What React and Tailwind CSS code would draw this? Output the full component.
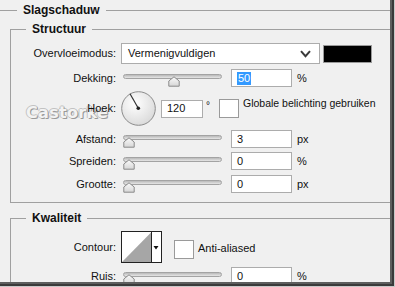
import React from "react";

const font = { fontFamily: '"Liberation Sans", Arial, sans-serif' };

// slider with track + thumb, thumb offset is passed as a full class name
const Slider = ({ thumb }) => (
  <div className="relative w-[99px] h-[18px] shrink-0">
    <div className="absolute left-0 right-0 top-[5px] h-[5px] rounded-full border border-[#a3a3a3] bg-gradient-to-b from-[#b9b9b9] to-[#e6e6e6]" />
    <svg className={`absolute top-[7px] ${thumb}`} width="12" height="11" viewBox="0 0 12 11">
      <defs>
        <linearGradient id="thumbfill" x1="0" y1="0" x2="0" y2="1">
          <stop offset="0" stopColor="#fbfbfb" />
          <stop offset="1" stopColor="#d6d6d6" />
        </linearGradient>
      </defs>
      <path d="M6 0.8 L11.2 5 V10.2 H0.8 V5 Z" fill="url(#thumbfill)" stroke="#8a8a8a" strokeWidth="1" />
    </svg>
  </div>
);

const NumBox = ({ value, selected, w = "w-[61px]" }) => (
  <div className={`${w} h-[18px] shrink-0 border border-[#acacac] bg-white flex items-center pl-[5px]`}>
    {selected ? (
      <span className="bg-[#3399ff] text-white leading-[13px] px-[1px]">{value}</span>
    ) : (
      <span>{value}</span>
    )}
  </div>
);

const Label = ({ children }) => (
  <div className="w-[105px] shrink-0 text-right">{children}</div>
);

const SliderRow = ({ label, thumb, value, unit, selected, className }) => (
  <div className={`flex items-center h-[18px] ${className}`}>
    <Label>{label}</Label>
    <div className="ml-[7px]">
      <Slider thumb={thumb} />
    </div>
    <div className="ml-[9px]">
      <NumBox value={value} selected={selected} />
    </div>
    <span className="ml-[5px]">{unit}</span>
  </div>
);

const Checkbox = () => (
  <div className="w-[20px] h-[19px] shrink-0 border border-[#9a9a9a] bg-white" />
);

export default function App() {
  return (
    <div
      className="relative w-[395px] h-[287px] overflow-hidden bg-[#f0f0f0] text-[11px] text-[#111]"
      style={font}
    >
      {/* watermark, painted under the dialog content */}
      <div
        className="absolute left-[26px] top-[101px] text-[16px] font-bold tracking-[0.3px] text-[#f3f3f3] pointer-events-none"
        style={{ fontFamily: '"DejaVu Sans", sans-serif', textShadow: "1px 1px 0 #999, -1px 0 0 #c2c2c2, 0 -1px 0 #c2c2c2, 1px 0 0 #aaa" }}
      >
        Castorke
      </div>

      {/* Slagschaduw heading */}
      <div className="relative flex items-center h-[20px]">
        <div className="w-[17px] h-px bg-[#a0a0a0]" />
        <span className="px-[6px] text-[12px] font-bold">Slagschaduw</span>
        <div className="flex-1 h-px bg-[#a0a0a0]" />
      </div>

      {/* Structuur */}
      <fieldset className="relative ml-[10px] w-[400px] border-l border-t border-b border-[#a0a0a0] pb-[9px]">
        <legend className="ml-[15px] px-[6px] text-[12px] font-bold leading-[18px]">Structuur</legend>

        <div className="flex items-center h-[21px] mt-[5px]">
          <Label>Overvloeimodus:</Label>
          <div className="ml-[5px] w-[199px] h-[21px] border border-[#acacac] bg-white flex items-center justify-between pl-[6px] pr-[8px]">
            <span>Vermenigvuldigen</span>
            <svg width="11" height="8" viewBox="0 0 11 8">
              <path d="M1 1.2 L5.5 6.2 L10 1.2" fill="none" stroke="#3a3a3a" strokeWidth="2" />
            </svg>
          </div>
          <div className="ml-[3px] w-[49px] h-[18px] border border-[#9a9a9a] bg-black" />
        </div>

        <SliderRow label="Dekking:" thumb="left-[45px]" value="50" unit="%" selected className="mt-[5px]" />

        <div className="flex items-center h-[35px] mt-[4px]">
          <Label>Hoek:</Label>
          <svg className="ml-[5px] shrink-0" width="35" height="35" viewBox="0 0 35 35">
            <defs>
              <radialGradient id="dial" cx="0.4" cy="0.35" r="0.7">
                <stop offset="0" stopColor="#ffffff" />
                <stop offset="1" stopColor="#d9d9d9" />
              </radialGradient>
            </defs>
            <circle cx="17.5" cy="17.5" r="16.8" fill="url(#dial)" stroke="#8c8c8c" strokeWidth="1" />
            <line x1="17.3" y1="17.3" x2="9" y2="2.8" stroke="#333" strokeWidth="1.2" />
            <circle cx="17.3" cy="17.3" r="1.8" fill="#222" />
          </svg>
          <div className="ml-[5px]">
            <NumBox value="120" w="w-[42px]" />
          </div>
          <span className="ml-[3px] self-start mt-[7px] text-[10px]">°</span>
          <div className="ml-[9px]">
            <Checkbox />
          </div>
          <span className="ml-[4px] -mt-[10px] text-[10.5px]">Globale belichting gebruiken</span>
        </div>

        <SliderRow label="Afstand:" thumb="left-0" value="3" unit="px" className="mt-[4px]" />
        <SliderRow label="Spreiden:" thumb="left-0" value="0" unit="%" className="mt-[4px]" />
        <SliderRow label="Grootte:" thumb="left-0" value="0" unit="px" className="mt-[5px]" />
      </fieldset>

      {/* Kwaliteit */}
      <fieldset className="relative ml-[10px] mt-[6px] w-[400px] border-l border-t border-[#a0a0a0] pb-[20px]">
        <legend className="ml-[15px] px-[6px] text-[12px] font-bold leading-[18px]">Kwaliteit</legend>

        <div className="flex items-center h-[32px] mt-[4px]">
          <Label>Contour:</Label>
          <svg className="ml-[5px] shrink-0" width="41" height="32" viewBox="0 0 41 32">
            <rect x="0.5" y="0.5" width="40" height="31" fill="#fff" stroke="#222" />
            <polygon points="1,31 30,1.5 30,31" fill="#a6a6a6" />
            <line x1="30.5" y1="0.5" x2="30.5" y2="31.5" stroke="#222" />
            <polygon points="32.5,15 37.5,15 35,18.5" fill="#111" />
          </svg>
          <div className="ml-[12px] mt-[4px]">
            <Checkbox />
          </div>
          <span className="ml-[4px] mt-[2px]">Anti-aliased</span>
        </div>

        <SliderRow label="Ruis:" thumb="left-0" value="0" unit="%" className="mt-[4px]" />
      </fieldset>

      {/* window edge shadow */}
      <div className="absolute inset-0 pointer-events-none shadow-[inset_-1px_-1px_0_#c8c8c8,inset_-3px_-3px_0_#3a3a3a,inset_-5px_-5px_0_#5e5e5e]" />
    </div>
  );
}
